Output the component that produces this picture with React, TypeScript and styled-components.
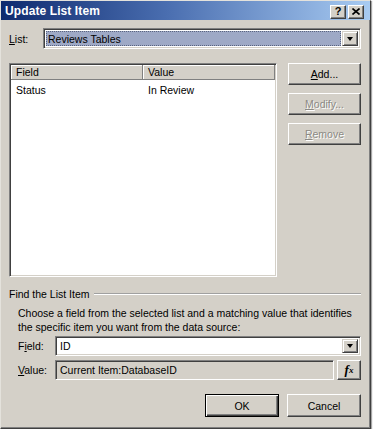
import styled, { createGlobalStyle } from 'styled-components';

const GlobalStyle = createGlobalStyle`
  * { box-sizing: border-box; }
  html, body { margin: 0; padding: 0; background: #fff; }
  body {
    font-family: "Liberation Sans", Arial, sans-serif;
    font-size: 10.5px;
    color: #000;
  }
`;

const Dialog = styled.div`
  width: 371px;
  height: 429px;
  background: #d4d0c8;
  border: 1px solid;
  border-color: #e4e2dc #404040 #404040 #e4e2dc;
  box-shadow: inset -1px -1px #808080, 1px 1px 1px rgba(0, 0, 0, 0.35);
  display: flex;
  flex-direction: column;
`;

const TitleBar = styled.div`
  height: 19px;
  padding: 0 6px 0 4px;
  display: flex;
  align-items: center;
  justify-content: space-between;
  background: linear-gradient(to right, #0e2a6e 0%, #4a6eb0 45%, #a8cbf2 100%);
`;

const Title = styled.span`
  color: #fff;
  font-weight: bold;
  font-size: 12px;
  letter-spacing: 0.1px;
`;

const TitleButtons = styled.div`
  display: flex;
  gap: 2px;
  margin-top: 2px;
`;

const TitleButton = styled.div`
  width: 16px;
  height: 14px;
  background: #d4d0c8;
  border: 1px solid;
  border-color: #fff #404040 #404040 #fff;
  box-shadow: inset -1px -1px #808080;
  display: flex;
  align-items: center;
  justify-content: center;
  font-weight: bold;
  font-size: 11px;
  line-height: 1;
`;

const Body = styled.div`
  flex: 1;
  padding: 0 9px 0 8px;
  display: flex;
  flex-direction: column;
`;

const FormRow = styled.div<{ $top: number; $height: number }>`
  display: flex;
  align-items: center;
  margin-top: ${(p) => p.$top}px;
  height: ${(p) => p.$height}px;
`;

const Label = styled.label<{ $width: number }>`
  width: ${(p) => p.$width}px;
  flex-shrink: 0;
`;

const Sunken = styled.div<{ $bg?: string }>`
  flex: 1;
  height: 100%;
  display: flex;
  align-items: stretch;
  padding: 2px;
  background: ${(p) => p.$bg ?? '#fff'};
  border: 1px solid;
  border-color: #808080 #fff #fff #808080;
  box-shadow: inset 1px 1px #404040, inset -1px -1px #d4d0c8;
`;

const FieldText = styled.div<{ $selected?: boolean }>`
  flex: 1;
  display: flex;
  align-items: center;
  padding-left: 2px;
  white-space: nowrap;
  ${(p) =>
    p.$selected &&
    `
    background: #9ea9c6;
    outline: 1px dotted #5a6480;
    outline-offset: -1px;
    margin-right: 1px;
  `}
`;

const DropButton = styled.div`
  width: 16px;
  flex-shrink: 0;
  background: #d4d0c8;
  border: 1px solid;
  border-color: #d4d0c8 #404040 #404040 #d4d0c8;
  box-shadow: inset 1px 1px #fff, inset -1px -1px #808080;
  display: flex;
  align-items: center;
  justify-content: center;
`;

const Arrow = styled.span`
  width: 0;
  height: 0;
  border-left: 3.5px solid transparent;
  border-right: 3.5px solid transparent;
  border-top: 4px solid #000;
`;

const Main = styled.div`
  display: flex;
  gap: 11px;
  margin-top: 14px;
  height: 214px;
`;

const ListView = styled.div`
  width: 269px;
  height: 100%;
  padding: 1px;
  background: #fff;
  border: 1px solid;
  border-color: #808080 #fff #fff #808080;
  box-shadow: inset 1px 1px #404040, inset -1px -1px #d4d0c8;
  display: flex;
  flex-direction: column;
`;

const Header = styled.div`
  display: flex;
  height: 15px;
`;

const HeaderCell = styled.div<{ $width?: number }>`
  ${(p) => (p.$width ? `width: ${p.$width}px;` : 'flex: 1;')}
  background: #d4d0c8;
  border-right: 1px solid #808080;
  border-bottom: 1px solid #808080;
  box-shadow: inset 1px 1px #fff;
  padding-left: 5px;
  line-height: 14px;
`;

const Rows = styled.div`
  padding-top: 2px;
`;

const Row = styled.div`
  display: flex;
  height: 16px;
  line-height: 16px;
`;

const Cell = styled.div<{ $width?: number }>`
  ${(p) => (p.$width ? `width: ${p.$width}px;` : 'flex: 1;')}
  padding-left: 5px;
`;

const SideButtons = styled.div`
  display: flex;
  flex-direction: column;
  gap: 8px;
`;

const Button = styled.button<{ $width: number; $height: number; $default?: boolean }>`
  width: ${(p) => p.$width}px;
  height: ${(p) => p.$height}px;
  padding: 0;
  font: inherit;
  color: #000;
  background: #d4d0c8;
  border: 1px solid;
  border-color: ${(p) => (p.$default ? '#000' : '#fff #404040 #404040 #fff')};
  box-shadow: ${(p) =>
    p.$default
      ? 'inset 1px 1px #fff, inset -1px -1px #404040, inset -2px -2px #808080'
      : 'inset -1px -1px #808080'};

  &:disabled {
    color: #8c8a84;
    text-shadow: 1px 1px #fff;
  }
`;

const GroupHeader = styled.div`
  display: flex;
  align-items: center;
  gap: 4px;
  margin-top: 10px;
  height: 14px;
`;

const Etch = styled.div`
  flex: 1;
  border-top: 1px solid #a0a0a0;
  border-bottom: 1px solid #fff;
`;

const Group = styled.div`
  padding-left: 9px;
  display: flex;
  flex-direction: column;
`;

const Hint = styled.p`
  margin: 5px 0 0;
  line-height: 14px;
`;

const FxButton = styled.div`
  width: 24px;
  height: 100%;
  margin-left: 3px;
  background: #d4d0c8;
  border: 1px solid;
  border-color: #fff #404040 #404040 #fff;
  box-shadow: inset -1px -1px #808080;
  display: flex;
  align-items: center;
  justify-content: center;
  font-family: "Liberation Serif", "Times New Roman", serif;
  font-style: italic;
  font-weight: bold;
  font-size: 13px;

  sub {
    font-size: 9px;
    vertical-align: -1px;
  }
`;

const Footer = styled.div`
  display: flex;
  justify-content: flex-end;
  gap: 8px;
  margin-top: 14px;
`;

function ComboBox({ value, selected }: { value: string; selected?: boolean }) {
  return (
    <Sunken>
      <FieldText $selected={selected}>{value}</FieldText>
      <DropButton>
        <Arrow />
      </DropButton>
    </Sunken>
  );
}

export default function App() {
  return (
    <>
      <GlobalStyle />
      <Dialog>
        <TitleBar>
          <Title>Update List Item</Title>
          <TitleButtons>
            <TitleButton>?</TitleButton>
            <TitleButton>
              <svg width="8" height="7" viewBox="0 0 8 7">
                <path d="M0.5 0.5 L7.5 6.5 M7.5 0.5 L0.5 6.5" stroke="#000" strokeWidth="1.6" />
              </svg>
            </TitleButton>
          </TitleButtons>
        </TitleBar>

        <Body>
          <FormRow $top={8} $height={21}>
            <Label $width={34}>
              <u>L</u>ist:
            </Label>
            <ComboBox value="Reviews Tables" selected />
          </FormRow>

          <Main>
            <ListView>
              <Header>
                <HeaderCell $width={132}>Field</HeaderCell>
                <HeaderCell>Value</HeaderCell>
              </Header>
              <Rows>
                <Row>
                  <Cell $width={132}>Status</Cell>
                  <Cell>In Review</Cell>
                </Row>
              </Rows>
            </ListView>
            <SideButtons>
              <Button $width={73} $height={22}>
                <u>A</u>dd...
              </Button>
              <Button $width={73} $height={22} disabled>
                <u>M</u>odify...
              </Button>
              <Button $width={73} $height={22} disabled>
                <u>R</u>emove
              </Button>
            </SideButtons>
          </Main>

          <GroupHeader>
            <span>Find the List Item</span>
            <Etch />
          </GroupHeader>
          <Group>
            <Hint>
              Choose a field from the selected list and a matching value that identifies
              <br />
              the specific item you want from the data source:
            </Hint>
            <FormRow $top={2} $height={20}>
              <Label $width={37}>
                F<u>i</u>eld:
              </Label>
              <ComboBox value="ID" />
            </FormRow>
            <FormRow $top={4} $height={20}>
              <Label $width={37}>
                <u>V</u>alue:
              </Label>
              <Sunken $bg="#d4d0c8">
                <FieldText>Current Item:DatabaseID</FieldText>
              </Sunken>
              <FxButton>
                f<sub>x</sub>
              </FxButton>
            </FormRow>
          </Group>

          <Footer>
            <Button $width={74} $height={23} $default>
              OK
            </Button>
            <Button $width={74} $height={23}>
              Cancel
            </Button>
          </Footer>
        </Body>
      </Dialog>
    </>
  );
}
